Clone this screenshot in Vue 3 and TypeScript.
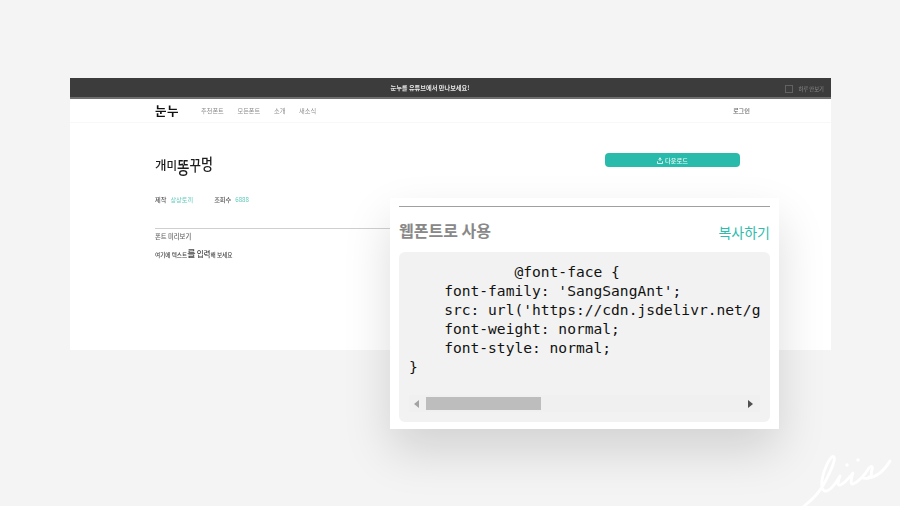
<script setup lang="ts">
const navItems: string[] = ['추천폰트', '모든폰트', '소개', '새소식']
const titleGlyphs: string[] = ['개', '미', '똥', '꾸', '멍']
const codeText = `            @font-face {
    font-family: 'SangSangAnt';
    src: url('https://cdn.jsdelivr.net/gh/projectnoonnu/noonfonts_five@1.0/SangSangAnt.woff') format('woff');
    font-weight: normal;
    font-style: normal;
}`
</script>

<template>
  <main class="stage">
    <section class="window">
      <div class="topbar">
        <span class="topbar-msg">눈누를 유튜브에서 만나보세요!</span>
        <label class="topbar-check"><i class="box"></i>하루 안보기</label>
      </div>
      <header class="nav">
        <div class="brand">눈누</div>
        <nav class="links">
          <a v-for="item in navItems" :key="item">{{ item }}</a>
        </nav>
        <a class="login">로그인</a>
      </header>
      <div class="content">
        <div class="head-row">
          <h1 class="font-title"><span v-for="g in titleGlyphs" :key="g" class="glyph">{{ g }}</span></h1>
          <button class="download">
            <svg width="6" height="7" viewBox="0 0 6 7" fill="none" stroke="#eafaf7" stroke-width="0.9">
              <path d="M3 .5v3.500M1.600 2.800 3 1 4.400 2.800M.5 4.300v2.200h5V4.300" />
            </svg>
            다운로드
          </button>
        </div>
        <div class="meta">
          <span class="meta-item"><b>제작</b><em>상상토끼</em></span>
          <span class="meta-item"><b>조회수</b><em>6888</em></span>
        </div>
        <div class="preview">
          <div class="preview-label">폰트 미리보기</div>
          <div class="preview-text">여기에 텍스트<span class="big">를</span> <span class="mid">입력</span>해 보세요</div>
        </div>
      </div>
    </section>

    <aside class="modal">
      <div class="modal-rule"></div>
      <div class="modal-head">
        <h2>웹폰트로 사용</h2>
        <a>복사하기</a>
      </div>
      <div class="code-box">
        <pre class="code">{{ codeText }}</pre>
        <div class="scrollbar">
          <svg class="arrow" width="6" height="8" viewBox="0 0 6 8"><path d="M5 0v8L0 4z" fill="#a3a3a3" /></svg>
          <div class="track"><div class="thumb"></div></div>
          <svg class="arrow" width="6" height="8" viewBox="0 0 6 8"><path d="M0 0v8l5-4z" fill="#505050" /></svg>
        </div>
      </div>
    </aside>

    <svg class="signature" width="105" height="56" viewBox="0 0 105 56" fill="none" stroke="#fff" stroke-width="2.800" stroke-linecap="round" stroke-linejoin="round">
      <path d="M14 56C22 50 30 42 35 32 40 22 46 10 44 7 41 4 34 18 32 30 31 38 33 42 37 41 42 39 46 33 50 26 48 31 47 36 50 35 54 34 58 29 63 23 61 29 60 35 63 34 68 32 74 26 79 18 82 15 83 17 82 20 80 24 84 25 78 28 75 29 73 28 72 27" />
      <path d="M78 28C86 27 94 21 100 11" />
      <path d="M57 15v.1M68 10v.1" stroke-width="3.400" />
    </svg>
  </main>
</template>

<style scoped>
.stage {
  position: relative;
  width: 900px;
  height: 506px;
  overflow: hidden;
  padding: 78px 69px 0 70px;
  box-sizing: border-box;
  background: #f4f4f4;
  font-family: "Noto Sans CJK KR", "Noto Sans", sans-serif;
}
.window {
  height: 272px;
  background: #fff;
  filter: blur(0.25px);
}
.topbar {
  height: 21px;
  box-sizing: border-box;
  border-bottom: 2px solid #6f6f6f;
  background: #3c3c3c;
  position: relative;
  display: flex;
  align-items: center;
  justify-content: center;
  padding-right: 41px;
}
.topbar-msg {
  font-size: 6.200px;
  font-weight: 700;
  color: #e6e6e6;
}
.topbar-check {
  position: absolute;
  right: 7px;
  top: 7px;
  display: flex;
  align-items: center;
  gap: 5px;
  font-size: 5.300px;
  line-height: 8px;
  color: #8c8c8c;
}
.box {
  width: 8px;
  height: 8px;
  box-sizing: border-box;
  border: 1px solid #626262;
}
.nav {
  height: 24px;
  box-sizing: border-box;
  border-bottom: 1px solid #f8f8f8;
  padding: 0 81px 0 85px;
  display: flex;
  align-items: center;
}
.brand {
  font-size: 12.500px;
  font-weight: 700;
  color: #111;
  width: 46px;
  letter-spacing: 0.5px;
}
.links {
  display: flex;
  gap: 13.700px;
  flex: 1;
}
.links a {
  font-size: 6.200px;
  color: #8e8e8e;
}
.login {
  font-size: 6.200px;
  font-weight: 500;
  color: #666;
}
.content {
  padding: 0 91px 0 85px;
}
.head-row {
  display: flex;
  justify-content: space-between;
  align-items: flex-start;
  height: 72px;
  padding-top: 30px;
  box-sizing: border-box;
}
.font-title {
  margin: -2px 0 0;
  font-size: 12.500px;
  line-height: 24px;
  font-weight: 500;
  color: #1c1c1c;
  display: flex;
  align-items: center;
  gap: 0;
  width: 60px;
}
.glyph:nth-child(2) {
  font-size: 11.500px;
}
.glyph:nth-child(3) {
  font-size: 13.500px;
  margin-top: 3px;
  transform: scaleY(1.300);
}
.glyph:nth-child(4) {
  transform: scaleY(1.150);
}
.glyph:nth-child(5) {
  font-size: 13px;
  margin-top: -2px;
  transform: scaleY(1.200);
}
.download {
  width: 135px;
  height: 14px;
  border: 0;
  border-radius: 4px;
  background: #28bbab;
  color: #eafaf7;
  font-family: inherit;
  font-size: 6.200px;
  font-weight: 500;
  display: flex;
  align-items: center;
  justify-content: center;
  gap: 2px;
  padding: 0;
}
.meta {
  display: flex;
  gap: 21px;
  height: 10px;
  margin-top: -1px;
  align-items: center;
  font-size: 6.200px;
}
.meta-item {
  display: flex;
  gap: 4px;
  min-width: 38px;
}
.meta b {
  font-weight: 500;
  color: #555;
}
.meta em {
  font-style: normal;
  color: #63cabc;
}
.preview {
  margin-top: 24px;
  border-top: 1px solid #cfcfcf;
  padding-top: 3px;
}
.preview-label {
  font-size: 6.300px;
  line-height: 9px;
  font-weight: 500;
  color: #666;
}
.preview-text {
  margin-top: 8px;
  font-size: 5.600px;
  line-height: 10px;
  font-weight: 500;
  color: #444;
}
.preview-text .big {
  font-size: 9px;
  line-height: 10px;
}
.preview-text .mid {
  font-size: 7.500px;
  line-height: 10px;
}
.modal {
  position: absolute;
  left: 390px;
  top: 198px;
  width: 389px;
  height: 231px;
  box-sizing: border-box;
  padding: 8px 9px 7px;
  background: #fff;
  box-shadow: 0 22px 45px rgba(0, 0, 0, 0.14);
}
.modal-rule {
  height: 1px;
  background: #a0a0a0;
}
.modal-head {
  height: 45px;
  display: flex;
  justify-content: space-between;
  align-items: center;
  box-sizing: border-box;
}
.modal-head h2 {
  margin: 0;
  font-size: 16px;
  font-weight: 700;
  color: #888;
  line-height: 22px;
}
.modal-head a {
  font-size: 14px;
  color: #2fbcae;
  line-height: 20px;
  margin-top: 4px;
}
.code-box {
  height: 170px;
  box-sizing: border-box;
  background: #f2f2f2;
  border-radius: 6px;
  padding: 10px 10px 0;
  overflow: hidden;
}
.code {
  margin: 0;
  height: 133px;
  overflow: hidden;
  font-family: "DejaVu Sans Mono", monospace;
  font-size: 14.600px;
  line-height: 19px;
  color: #111;
}
.scrollbar {
  height: 17px;
  display: flex;
  align-items: center;
  justify-content: space-between;
  background: #f0f0f0;
  padding: 0 6px 0 5px;
  box-sizing: border-box;
}
.track {
  flex: 1;
  height: 13px;
  padding-left: 6px;
}
.thumb {
  width: 115px;
  height: 13px;
  background: #bdbdbd;
}
.signature {
  position: absolute;
  left: 790px;
  top: 450px;
}
</style>
